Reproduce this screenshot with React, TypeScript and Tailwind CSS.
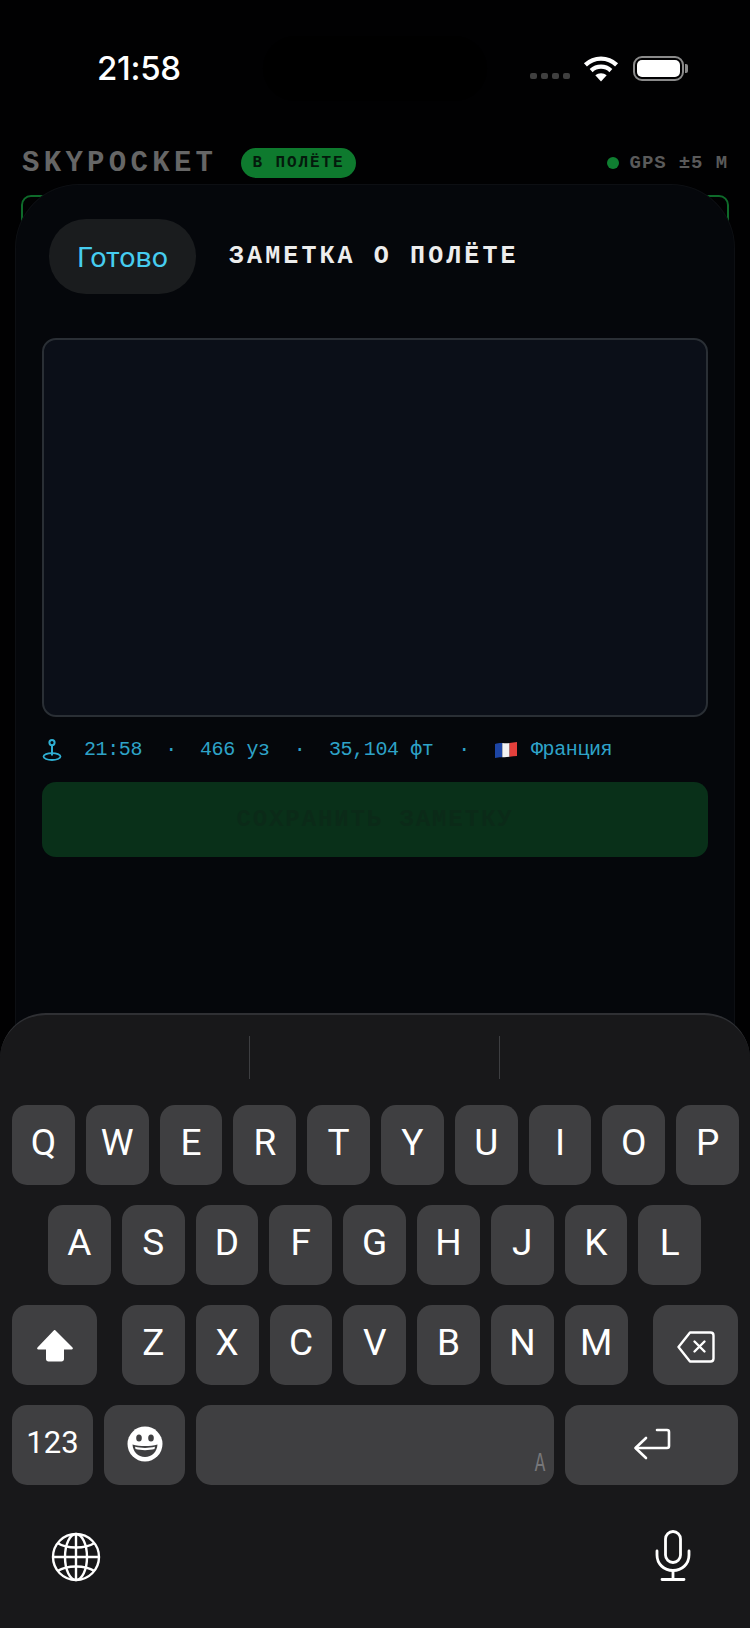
const mono = "font-['Liberation_Mono',monospace]";

const rows = ["QWERTYUIOP", "ASDFGHJKL", "ZXCVBNM"];

function Key({ children, className = "w-[62.800px]" }: { children?: React.ReactNode; className?: string }) {
  return (
    <div className={`relative flex h-20 shrink-0 items-center justify-center rounded-[15px] bg-[#3f3f41] text-[37px] text-white ${className}`}>
      {children}
    </div>
  );
}

function Letter({ c }: { c: string }) {
  return (
    <Key>
      <span className="mb-1">{c}</span>
    </Key>
  );
}

function Wifi() {
  return (
    <svg width="36" height="27" viewBox="0 0 34 26" fill="none" stroke="white" strokeWidth="4.2">
      <path d="M2 9.500C10.500 1.500 23.500 1.500 32 9.500" />
      <path d="M7.500 15C13 10 21 10 26.500 15" />
      <path d="M17 25.500 11.500 19.600C14.500 17 19.500 17 22.500 19.600Z" fill="white" stroke="none" />
    </svg>
  );
}

function ShiftIcon() {
  return (
    <svg width="38" height="33" viewBox="0 0 38 33" fill="white">
      <path d="M19 1 36.500 18.500c.8.9.3 2-.8 2H28v9.500c0 1.600-1 2.500-2.500 2.500h-13c-1.500 0-2.500-.9-2.500-2.500v-9.500H2.300c-1.100 0-1.600-1.100-.8-2L17 2.200C17.800 1.300 18.200 1 19 1Z" />
    </svg>
  );
}

function BackspaceIcon() {
  return (
    <svg className="mt-1" width="38" height="32" viewBox="0 0 38 32" fill="none" stroke="white" strokeWidth="2.4" strokeLinecap="round" strokeLinejoin="round">
      <path d="M13 1.500H33.500c1.700 0 3 1.300 3 3v23c0 1.700-1.300 3-3 3H13L1.500 16Z" />
      <path d="M17.500 10.500 27.500 20.500M27.500 10.500 17.500 20.500" />
    </svg>
  );
}

function ReturnIcon() {
  return (
    <svg className="mb-[2px]" width="38" height="32" viewBox="0 0 38 32" fill="none" stroke="white" strokeWidth="2.6" strokeLinecap="round" strokeLinejoin="round">
      <path d="M24 2H34c1.200 0 2 .8 2 2v14c0 1.200-.8 2-2 2H3" />
      <path d="M13 10 2.500 20 13 30" />
    </svg>
  );
}

function EmojiIcon() {
  return (
    <svg className="mb-[2px]" width="36" height="36" viewBox="0 0 36 36">
      <circle cx="18" cy="18" r="17.500" fill="white" />
      <ellipse cx="12" cy="12" rx="2.800" ry="3.600" fill="#3f3f41" />
      <ellipse cx="24" cy="12" rx="2.800" ry="3.600" fill="#3f3f41" />
      <path d="M5.500 18.500C13 20.500 23 20.500 30.500 18.500 30 26 25 31 18 31S6 26 5.500 18.500Z" fill="#3f3f41" />
      <path d="M8 20.800C14 22.300 22 22.300 28 20.800L27.500 23C22 24.500 14 24.500 8.500 23Z" fill="white" />
    </svg>
  );
}

function GlobeIcon() {
  return (
    <svg className="mt-[3px]" width="50" height="50" viewBox="0 0 50 50" fill="none" stroke="white" strokeWidth="2.400">
      <circle cx="25" cy="25" r="23" />
      <ellipse cx="25" cy="25" rx="11" ry="23" />
      <path d="M25 2V48M2 25H48" />
      <path d="M6.500 11C16 17 34 17 43.500 11M6.500 39C16 33 34 33 43.500 39" />
    </svg>
  );
}

function MicIcon() {
  return (
    <svg width="36" height="52" viewBox="0 0 36 52" fill="none" stroke="white" strokeWidth="2.800" strokeLinecap="round">
      <rect x="10.500" y="1.500" width="15" height="31" rx="7.500" />
      <path d="M2 21V25C2 34 9 40.500 18 40.500S34 34 34 25V21" />
      <path d="M18 40.500V49.500M7 49.500H29" />
    </svg>
  );
}

// Location marker standing on a ring
function PinIcon() {
  return (
    <svg width="20" height="22" viewBox="0 0 20 22" fill="none" stroke="#2fb0d4" strokeWidth="2">
      <circle cx="10" cy="3.600" r="2.600" fill="#05070b" />
      <path d="M10 6V16.500" />
      <ellipse cx="10" cy="17.600" rx="8.500" ry="3.400" strokeWidth="1.800" />
    </svg>
  );
}

function FlagIcon() {
  return (
    <svg width="22" height="16" viewBox="0 0 22 16">
      <path d="M0 2C3 1 5 .8 7.300 1V15.200C5 15 3 15.200 0 16Z" fill="#1d45a5" />
      <path d="M7.300 1C10 1.200 12 1.400 14.600 1V14.800C12 15.200 10 15.400 7.300 15.200Z" fill="#f2f2f2" />
      <path d="M14.600 1C17 .6 19.500 .2 22 0V14C19.500 14 17 14.400 14.600 14.800Z" fill="#e5403c" />
    </svg>
  );
}

export default function App() {
  return (
    <div className="relative h-[1628px] w-[750px] overflow-hidden bg-[#010102] font-['Roboto',sans-serif]">
      {/* Status bar */}
      <div className="flex h-[148px] items-start justify-between pl-[97px] pr-[62px] pt-[49px]">
        <span className="font-['Inter',sans-serif] text-[33px] font-medium leading-[38px] tracking-[-0.3px] text-white">21:58</span>
        <div className="mt-[6px] flex items-center">
          <div className="mt-[14px] flex gap-[4px]">
            {[0, 1, 2, 3].map((d) => (
              <span key={d} className="h-[6px] w-[7px] rounded-[2px] bg-[#3f3f3f]" />
            ))}
          </div>
          <div className="ml-[13px]">
            <Wifi />
          </div>
          <div className="ml-[14px] flex items-center">
            <div className="h-[25px] w-[51px] rounded-[9px] border-2 border-[#8b8b8b] p-[2px]">
              <div className="h-full w-full rounded-[5px] bg-white" />
            </div>
            <div className="ml-[1px] h-[9px] w-[3px] rounded-r-[2px] bg-[#8b8b8b]" />
          </div>
        </div>
      </div>

      {/* Dynamic island */}
      <div className="absolute left-[263px] top-[36px] h-[65px] w-[224px] rounded-[33px] bg-black" />

      {/* App header behind the sheet */}
      <div className="flex h-[30px] items-center pl-[22px] pr-[22px]">
        <span className={`${mono} w-[197px] whitespace-nowrap text-[29px] font-bold leading-none tracking-[4.300px] text-[#666666]`}>SKYPOCKET</span>
        <span className={`${mono} ml-[22px] flex h-[30px] w-[115px] items-center justify-center rounded-full bg-[#0e7a2e] text-[16px] font-bold tracking-[1.900px] text-[#041a0c]`}>
          В ПОЛЁТЕ
        </span>
        <span className="ml-auto h-3 w-3 rounded-full bg-[#0f7f31]" />
        <span className={`${mono} ml-[11px] text-[19px] font-bold tracking-[0.900px] text-[#5a5a5a]`}>GPS ±5 M</span>
      </div>
      <div className="mx-[21px] mt-[17px] h-[200px] rounded-[10px] border-2 border-[#0e6a2a]" />

      {/* Note sheet */}
      <div className="absolute inset-x-[15px] bottom-0 top-[184px] rounded-t-[64px] border-x border-t border-[#0d0f13] bg-[#05070b] px-[26px]">
        <div className="ml-[7px] mt-[34px] flex items-center">
          <button className="flex h-[75px] w-[147px] items-center justify-center rounded-[37px] bg-[#1a1c1e] pt-[3px] text-[28.500px] text-[#46cdf0]">
            Готово
          </button>
          <h2 className={`${mono} ml-[33px] mt-[1px] whitespace-nowrap text-[25px] font-bold tracking-[3.100px] text-[#ededed]`}>ЗАМЕТКА О ПОЛЁТЕ</h2>
        </div>
        <div className="mt-[44px] h-[379px] rounded-[14px] border-2 border-[#2a2f35] bg-[#0b0f18]" />
        <div className={`${mono} mt-[21px] flex h-[24px] items-center text-[20px] tracking-[-0.400px] text-[#2ea3c8]`}>
          <PinIcon />
          <span className="ml-[22px] w-[58px] whitespace-nowrap">21:58</span>
          <span className="w-[58px] text-center">·</span>
          <span className="w-[70px] whitespace-nowrap">466 уз</span>
          <span className="w-[59px] text-center">·</span>
          <span className="w-[105px] whitespace-nowrap">35,104 фт</span>
          <span className="w-[60px] text-center">·</span>
          <span className="ml-[1px]"><FlagIcon /></span>
          <span className="ml-[14px] whitespace-nowrap">Франция</span>
        </div>
        <button className={`${mono} mt-[20px] flex h-[75px] w-full items-center justify-center rounded-[14px] bg-[#093019] text-[24px] font-bold tracking-[1.900px] text-[#0b2a18]`}>
          СОХРАНИТЬ ЗАМЕТКУ
        </button>
      </div>

      {/* Keyboard */}
      <div className="absolute inset-x-0 bottom-0 h-[615px] rounded-t-[46px] border-t-2 border-[#2f3034] bg-[#18181a]">
        <div className="flex h-[90px] gap-[249px] pl-[249px] pt-[21px]">
          <span className="h-[43px] w-px bg-[#3d3e41]" />
          <span className="h-[43px] w-px bg-[#3d3e41]" />
        </div>
        <div className="flex flex-col gap-5">
          <div className="flex gap-[11px] pl-3">
            {rows[0].split("").map((c) => (
              <Letter key={c} c={c} />
            ))}
          </div>
          <div className="flex gap-[11px] pl-12">
            {rows[1].split("").map((c) => (
              <Letter key={c} c={c} />
            ))}
          </div>
          <div className="flex px-3">
            <Key className="w-[85px]">
              <ShiftIcon />
            </Key>
            <div className="ml-[25px] flex gap-[11px]">
              {rows[2].split("").map((c) => (
                <Letter key={c} c={c} />
              ))}
            </div>
            <Key className="ml-auto w-[85px]">
              <BackspaceIcon />
            </Key>
          </div>
          <div className="flex gap-[11px] px-3">
            <Key className="w-[81px]">
              <span className="mb-1 text-[31px]">123</span>
            </Key>
            <Key className="w-[81px]">
              <EmojiIcon />
            </Key>
            <Key className="w-[358px]">
              <span className={`${mono} absolute bottom-[7px] right-[6px] scale-x-[0.65] text-[27px] leading-none text-[#77777a]`}>A</span>
            </Key>
            <Key className="flex-1">
              <ReturnIcon />
            </Key>
          </div>
        </div>
        <div className="flex items-center justify-between pl-[51px] pr-[59px] pt-[44px]">
          <GlobeIcon />
          <MicIcon />
        </div>
      </div>
    </div>
  );
}
